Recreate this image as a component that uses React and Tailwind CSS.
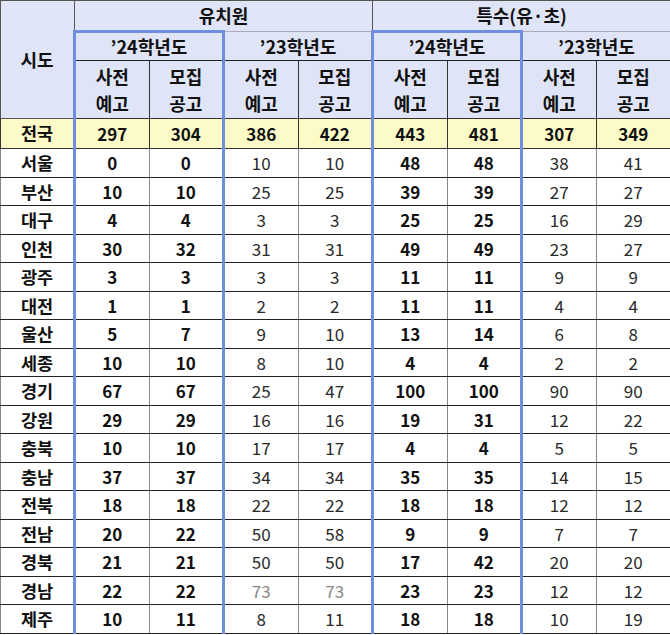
const rows = [
  ['서울', 0, 0, 10, 10, 48, 48, 38, 41],
  ['부산', 10, 10, 25, 25, 39, 39, 27, 27],
  ['대구', 4, 4, 3, 3, 25, 25, 16, 29],
  ['인천', 30, 32, 31, 31, 49, 49, 23, 27],
  ['광주', 3, 3, 3, 3, 11, 11, 9, 9],
  ['대전', 1, 1, 2, 2, 11, 11, 4, 4],
  ['울산', 5, 7, 9, 10, 13, 14, 6, 8],
  ['세종', 10, 10, 8, 10, 4, 4, 2, 2],
  ['경기', 67, 67, 25, 47, 100, 100, 90, 90],
  ['강원', 29, 29, 16, 16, 19, 31, 12, 22],
  ['충북', 10, 10, 17, 17, 4, 4, 5, 5],
  ['충남', 37, 37, 34, 34, 35, 35, 14, 15],
  ['전북', 18, 18, 22, 22, 18, 18, 12, 12],
  ['전남', 20, 22, 50, 58, 9, 9, 7, 7],
  ['경북', 21, 21, 50, 50, 17, 42, 20, 20],
  ['경남', 22, 22, 73, 73, 23, 23, 12, 12],
  ['제주', 10, 11, 8, 11, 18, 18, 10, 19],
]

const total = ['전국', 297, 304, 386, 422, 443, 481, 307, 349]

// columns 1,2 and 5,6 are the '24 groups (blue outline)
const BOLD = [1, 2, 5, 6]

function cellBorder(i) {
  if (i === 1 || i === 5) return 'border-l-[3px] border-l-[#6f8ede]'
  if (i === 2 || i === 6) return 'border-r-[3px] border-r-[#6f8ede]'
  return ''
}

function textClass(name, i) {
  if (i === 0) return 'font-bold text-[17.5px] text-[#111]'
  if (BOLD.includes(i)) return 'font-bold text-[#111]'
  // faded watermark over these two cells in the source image
  if (name === '경남' && (i === 3 || i === 4)) return 'font-normal text-[#888]'
  return 'font-normal text-[#2a2a2a]'
}

function SubHead({ a, b, i }) {
  return (
    <th className={`border border-[#333] font-bold text-[18px] leading-[27px] ${cellBorder(i)}`}>
      {a}
      <br />
      {b}
    </th>
  )
}

export default function App() {
  return (
    <div className="w-[670px] h-[635px] bg-white overflow-hidden">
      <table
        className="w-[670px] table-fixed border-collapse text-[17px] text-[#111] text-center"
        style={{ fontFamily: '"Noto Sans CJK KR", "Noto Sans", sans-serif' }}
      >
        <colgroup>
          <col className="w-[74px]" />
          {Array.from({ length: 8 }).map((_, i) => (
            <col key={i} className="w-[74.5px]" />
          ))}
        </colgroup>
        <thead className="bg-[#dfe5f7] text-[18px]">
          <tr className="h-[31px]">
            <th rowSpan={3} className="border border-[#555] font-bold">
              시도
            </th>
            <th colSpan={4} className="border border-[#555] border-b-[#aab] font-bold">
              유치원
            </th>
            <th colSpan={4} className="border border-[#555] border-b-[#aab] font-bold">
              특수(유·초)
            </th>
          </tr>
          <tr className="h-[29px]">
            <th colSpan={2} className="border-[3px] border-[#6f8ede] border-b-[#222] border-b font-bold">
              ’24학년도
            </th>
            <th colSpan={2} className="border border-[#555] border-b-[#222] font-bold">
              ’23학년도
            </th>
            <th colSpan={2} className="border-[3px] border-[#6f8ede] border-b-[#222] border-b font-bold">
              ’24학년도
            </th>
            <th colSpan={2} className="border border-[#555] border-b-[#222] font-bold">
              ’23학년도
            </th>
          </tr>
          <tr className="h-[58px]">
            {[1, 2, 3, 4, 5, 6, 7, 8].map((i) =>
              i % 2 === 1 ? (
                <SubHead key={i} a="사전" b="예고" i={i} />
              ) : (
                <SubHead key={i} a="모집" b="공고" i={i} />
              )
            )}
          </tr>
        </thead>
        <tbody>
          <tr className="h-[30px] bg-[#fcfbc8] font-bold">
            {total.map((v, i) => (
              <td
                key={i}
                className={`border border-[#333] ${i === 0 ? 'text-[17.5px]' : ''} ${cellBorder(i)}`}
              >
                {v}
              </td>
            ))}
          </tr>
          {rows.map((r) => (
            <tr key={r[0]} className="h-[28.5px]">
              {r.map((v, i) => (
                <td
                  key={i}
                  className={`border border-x-[#888] border-y-[#222] leading-none ${cellBorder(i)} ${textClass(
                    r[0],
                    i
                  )}`}
                >
                  {v}
                </td>
              ))}
            </tr>
          ))}
        </tbody>
      </table>
    </div>
  )
}
